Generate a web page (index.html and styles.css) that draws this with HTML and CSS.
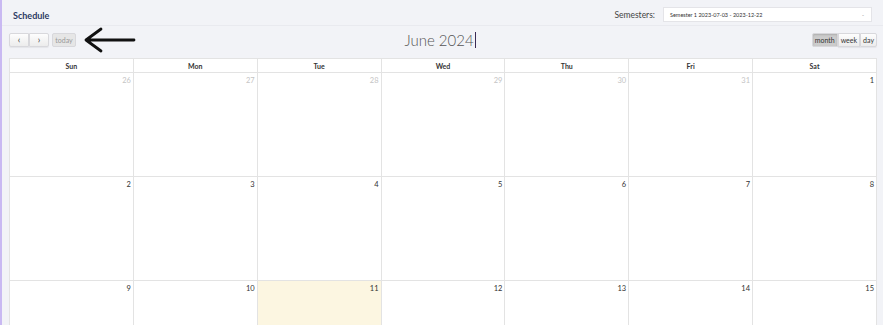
FILE: index.html
```html
<!DOCTYPE html>
<html lang="en">
<head>
    <meta charset="UTF-8">
    <title>Schedule</title>
    <link rel="stylesheet" href="styles.css">
</head>
<body>
<div class="page">
    <div class="topbar">
        <span class="page-title">Schedule</span>
        <div class="semester">
            <label>Semesters:</label>
            <div class="select"><span>Semester 1 2023-07-03 - 2023-12-22</span><span class="caret">-</span></div>
        </div>
    </div>

    <div class="toolbar">
        <div class="left">
            <div class="btn-group">
                <button class="btn">&lsaquo;</button><button class="btn">&rsaquo;</button>
            </div>
            <button class="btn today">today</button>
            <svg class="pointer" width="52" height="26" viewBox="0 0 52 26">
                <path d="M2 13 L50 13 M2 13 L17 2 M2 13 L17 24" stroke="#111" stroke-width="2.8" fill="none" stroke-linecap="round"/>
            </svg>
        </div>
        <h2 class="month-title">June 2024<span class="cursor"></span></h2>
        <div class="btn-group views">
            <button class="btn active">month</button><button class="btn">week</button><button class="btn">day</button>
        </div>
    </div>

    <table class="cal">
        <thead>
            <tr><th>Sun</th><th>Mon</th><th>Tue</th><th>Wed</th><th>Thu</th><th>Fri</th><th>Sat</th></tr>
        </thead>
        <tbody>
            <tr>
                <td class="other">26</td><td class="other">27</td><td class="other">28</td><td class="other">29</td><td class="other">30</td><td class="other">31</td><td>1</td>
            </tr>
            <tr>
                <td>2</td><td>3</td><td>4</td><td>5</td><td>6</td><td>7</td><td>8</td>
            </tr>
            <tr>
                <td>9</td><td>10</td><td class="today-cell">11</td><td>12</td><td>13</td><td>14</td><td>15</td>
            </tr>
        </tbody>
    </table>
</div>
</body>
</html>
```
FILE: styles.css
```css
body {
    margin: 0;
    font-family: Lato, "Open Sans", sans-serif;
    background: #f2f3f7;
    overflow: hidden;
}
.page {
    border-left: 2px solid #c9b9f2;
    padding: 0 6px 0 7px;
    height: 325px;
    box-sizing: border-box;
}
.topbar {
    display: flex;
    justify-content: space-between;
    align-items: center;
    height: 25px;
    border-bottom: 1px solid #e9eaef;
    margin: 0 -6px 0 -7px;
    padding: 0 11px 0 11px;
}
.page-title {
    font-size: 9px;
    font-weight: bold;
    color: #2b3a63;
    padding-top: 6px;
}
.semester {
    display: flex;
    align-items: center;
    gap: 8px;
    padding-top: 4px;
}
.semester label {
    font-size: 8.5px;
    color: #444;
}
.select {
    width: 209px;
    height: 15px;
    box-sizing: border-box;
    background: #fff;
    border: 1px solid #e4e4e8;
    display: flex;
    justify-content: space-between;
    align-items: center;
    padding: 0 7px 0 6px;
    font-size: 5.5px;
    color: #333;
}
.select .caret {
    color: #888;
}
.toolbar {
    display: flex;
    justify-content: space-between;
    align-items: center;
    height: 28px;
    margin-bottom: 4px;
}
.left {
    display: flex;
    align-items: center;
    gap: 3px;
    flex: 1;
}
.btn-group {
    display: flex;
}
.btn {
    font-family: Lato, sans-serif;
    height: 14px;
    border: 1px solid #d8d8dc;
    background: linear-gradient(#fdfdfd, #ececec);
    font-size: 7px;
    color: #333;
    padding: 0 5px;
    margin: 0;
    line-height: 12px;
    border-radius: 2px;
    box-shadow: 0 1px 1px rgba(0,0,0,0.06);
}
.btn-group .btn {
    border-radius: 0;
}
.btn-group .btn:first-child {
    border-radius: 2px 0 0 2px;
}
.btn-group .btn:last-child {
    border-radius: 0 2px 2px 0;
}
.btn-group:not(.views) .btn {
    width: 20px;
    font-size: 9px;
}
.btn.today {
    background: #e6e6e6;
    color: #999;
    width: 24px;
    padding: 0;
    box-shadow: none;
}
.pointer {
    margin-left: 5px;
}
.month-title {
    flex: 0 0 auto;
    margin: 0;
    font-size: 15px;
    font-weight: 300;
    color: #555;
    display: flex;
    align-items: center;
    transform: translateX(-3px);
}
.cursor {
    display: inline-block;
    width: 1px;
    height: 16px;
    background: #3a2b55;
    margin-left: 1px;
}
.views {
    flex: 1;
    justify-content: flex-end;
}
.views .btn {
    padding: 0 2px;
    font-size: 7px;
}
.views .btn.active {
    background: #cccccc;
    box-shadow: inset 0 1px 2px rgba(0,0,0,0.15);
}
.cal {
    width: 868px;
    border-collapse: collapse;
    table-layout: fixed;
    background: #fff;
}
.cal th {
    font-size: 7px;
    font-weight: bold;
    color: #333;
    height: 13px;
    border: 1px solid #e3e3e3;
    padding: 0;
}
.cal td {
    height: 104px;
    border: 1px solid #e3e3e3;
    vertical-align: top;
    text-align: right;
    font-size: 7.5px;
    color: #333;
    padding: 3px 2px 0 0;
    box-sizing: border-box;
}
.cal td.other {
    color: #c4c4c4;
}
.cal td.today-cell {
    background: #fcf6e1;
}
```
